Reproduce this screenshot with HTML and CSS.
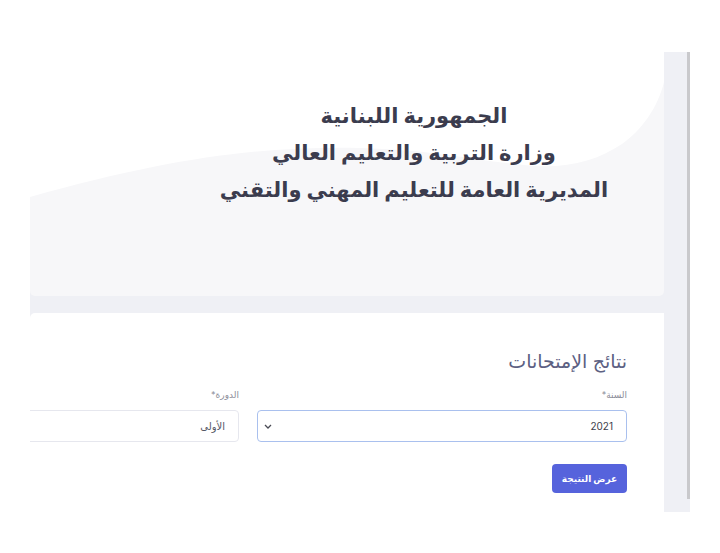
FILE: index.html
```html
<!DOCTYPE html>
<html lang="ar">
<head>
    <meta charset="utf-8">
    <title>نتائج الإمتحانات</title>
    <link rel="stylesheet" href="styles.css">
</head>
<body>
    <div class="frame">
        <div class="content" dir="rtl">
            <div class="hero">
                <svg class="wave" viewBox="0 0 634 244" preserveAspectRatio="none">
                    <path d="M0,0 H634 V30 C628,55 612,78 592,92 C568,108 540,116 505,114 C450,110 410,98 330,96 C230,94 140,106 0,145 Z" fill="#ffffff"/>
                </svg>
                <div class="hero-text">
                    <div>الجمهورية اللبنانية</div>
                    <div>وزارة التربية والتعليم العالي</div>
                    <div>المديرية العامة للتعليم المهني والتقني</div>
                </div>
            </div>

            <div class="card">
                <h2 class="title">نتائج الإمتحانات</h2>
                <div class="fields">
                    <div class="field">
                        <label class="label">السنة*</label>
                        <div class="select focused">
                            <span>2021</span>
                            <svg width="8" height="5" viewBox="0 0 8 5"><path d="M1 1l3 3 3-3" fill="none" stroke="#4a4b55" stroke-width="1.3"/></svg>
                        </div>
                    </div>
                    <div class="field">
                        <label class="label">الدورة*</label>
                        <div class="select">
                            <span>الأولى</span>
                        </div>
                    </div>
                </div>
                <button class="btn">عرض النتيجة</button>
            </div>
        </div>
        <div class="scrollbar"></div>
    </div>
</body>
</html>
```

FILE: styles.css
```css
body { margin: 0; background: #ffffff; font-family: Inter, "DejaVu Sans", sans-serif; }

.frame {
    margin: 52px 0 0 30px;
    width: 660px;
    height: 460px;
    background: #eff0f5;
    display: flex;
    overflow: hidden;
}
.content {
    flex: 1;
    padding-right: 23px;
    overflow: hidden;
    display: flex;
    flex-direction: column;
}
.scrollbar { width: 3px; height: 447px; background: #c9c9cc; }

.hero {
    position: relative;
    flex: none;
    height: 244px;
    background: #f7f7f9;
    border-radius: 0 0 5px 5px;
    overflow: hidden;
}
.wave { position: absolute; left: 0; top: 0; width: 100%; height: 100%; }
.hero-text {
    position: relative;
    padding: 45px 0 0 134px;
    text-align: center;
    font-size: 21px;
    font-weight: bold;
    line-height: 37px;
    color: #3b3c4e;
}

.card {
    flex: none;
    margin-top: 17px;
    height: 260px;
    background: #ffffff;
    border-radius: 5px 0 0 0;
    padding: 35px 37px 0 0;
    overflow: hidden;
}
.title {
    margin: 0 0 13px;
    font-size: 19px;
    font-weight: normal;
    line-height: 28px;
    color: #5c6082;
}
.fields {
    display: grid;
    grid-template-columns: 370px 370px;
    gap: 18px;
}
.label {
    display: block;
    font-size: 9px;
    line-height: 12px;
    color: #8d8e99;
    margin-bottom: 9px;
}
.select {
    height: 32px;
    box-sizing: border-box;
    border: 1px solid #e6e7ee;
    border-radius: 4px;
    padding: 0 13px 0 6px;
    display: flex;
    align-items: center;
    justify-content: space-between;
    font-size: 10px;
    color: #555766;
}
.select.focused { border-color: #a9c0ee; color: #3d3f4c; }

.btn {
    margin-top: 22px;
    width: 75px;
    height: 29px;
    border: none;
    border-radius: 4px;
    background: #5663dc;
    color: #ffffff;
    font-family: Inter, "DejaVu Sans", sans-serif;
    font-size: 9px;
    font-weight: bold;
    cursor: pointer;
}
```
